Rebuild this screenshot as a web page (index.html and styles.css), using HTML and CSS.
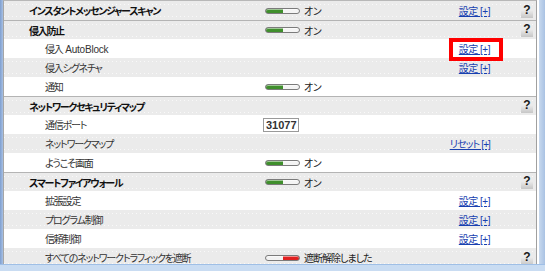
FILE: index.html
```html
<!DOCTYPE html>
<html lang="ja">
<head>
<meta charset="utf-8">
<link rel="stylesheet" href="styles.css">
</head>
<body>
<div class="window">
  <div class="frame">
    <div class="edge-l"></div>
    <div class="panel">
      <div class="row head grey">
        <div class="label">インスタントメッセンジャースキャン</div>
        <div class="value"><span class="switch on"></span><span>オン</span></div>
        <div class="link"><a href="#">設定 [+]</a></div>
        <div class="help"><span class="q">?</span></div>
      </div>
      <div class="row head grey">
        <div class="label">侵入防止</div>
        <div class="value"><span class="switch on"></span><span>オン</span></div>
        <div class="link"></div>
        <div class="help"><span class="q">?</span></div>
      </div>
      <div class="row">
        <div class="label sub">侵入 <span class="latin">AutoBlock</span></div>
        <div class="value"></div>
        <div class="link"><a href="#" class="marked">設定 [+]</a></div>
        <div class="help"></div>
      </div>
      <div class="row grey">
        <div class="label sub">侵入シグネチャ</div>
        <div class="value"></div>
        <div class="link"><a href="#">設定 [+]</a></div>
        <div class="help"></div>
      </div>
      <div class="row">
        <div class="label sub">通知</div>
        <div class="value"><span class="switch on"></span><span>オン</span></div>
        <div class="link"></div>
        <div class="help"></div>
      </div>
      <div class="row head grey">
        <div class="label">ネットワークセキュリティマップ</div>
        <div class="value"></div>
        <div class="link"></div>
        <div class="help"><span class="q">?</span></div>
      </div>
      <div class="row">
        <div class="label sub">通信ポート</div>
        <div class="value"><span class="port">31077</span></div>
        <div class="link"></div>
        <div class="help"></div>
      </div>
      <div class="row grey">
        <div class="label sub">ネットワークマップ</div>
        <div class="value"></div>
        <div class="link"><a href="#" class="tight">リセット [+]</a></div>
        <div class="help"></div>
      </div>
      <div class="row">
        <div class="label sub">ようこそ画面</div>
        <div class="value"><span class="switch on"></span><span>オン</span></div>
        <div class="link"></div>
        <div class="help"></div>
      </div>
      <div class="row head grey">
        <div class="label">スマートファイアウォール</div>
        <div class="value"><span class="switch on"></span><span>オン</span></div>
        <div class="link"></div>
        <div class="help"><span class="q">?</span></div>
      </div>
      <div class="row">
        <div class="label sub">拡張設定</div>
        <div class="value"></div>
        <div class="link"><a href="#">設定 [+]</a></div>
        <div class="help"></div>
      </div>
      <div class="row grey">
        <div class="label sub">プログラム制御</div>
        <div class="value"></div>
        <div class="link"><a href="#">設定 [+]</a></div>
        <div class="help"></div>
      </div>
      <div class="row">
        <div class="label sub">信頼制御</div>
        <div class="value"></div>
        <div class="link"><a href="#">設定 [+]</a></div>
        <div class="help"></div>
      </div>
      <div class="row grey">
        <div class="label sub">すべてのネットワークトラフィックを遮断</div>
        <div class="value"><span class="switch off"></span><span class="status">遮断解除しました</span></div>
        <div class="link"></div>
        <div class="help"><span class="q">?</span></div>
      </div>
    </div>
    <div class="edge-r"></div>
  </div>
  <div class="edge-b"></div>
</div>
</body>
</html>
```

FILE: styles.css
```css
* { box-sizing: border-box; }
html, body { margin: 0; padding: 0; background: #fff; }
body {
  width: 545px;
  height: 271px;
  overflow: hidden;
  font-family: "Liberation Sans", "Noto Sans CJK JP", sans-serif;
  font-size: 10px;
  letter-spacing: -0.5px;
  color: #222;
  font-feature-settings: "palt";
}
.window { display: flex; flex-direction: column; height: 271px; }
.frame { display: flex; height: 264px; overflow: hidden; }
.edge-l {
  width: 3px;
  background: linear-gradient(to right, #7f9fcf, #a7c0e4);
}
.panel {
  flex: 1;
  border-left: 1px solid #a6a6a6;
  border-right: 1px solid #a0a0a0;
  border-top: 1px solid #b8b8b8;
  display: flex;
  flex-direction: column;
}
.edge-r {
  width: 8px;
  background: linear-gradient(to right, #fff 0 2px, #c8d9ee 2px, #a9c2e3);
}
.edge-b {
  height: 7px;
  background: linear-gradient(to bottom, #9fbfe6 0 1px, #c9dcf2 1px);
}
.row {
  display: grid;
  grid-template-columns: 261px 183px 42px 1fr;
  align-items: center;
  height: 19px;
  flex: none;
  background: #fff;
}
.row.grey {
  background-color: #ebebeb;
  background-image:
    repeating-linear-gradient(to right, #f9f9f9 0 1px, transparent 1px 4px),
    repeating-linear-gradient(to right, #f9f9f9 0 1px, transparent 1px 4px);
  background-size: 100% 1px, 100% 1px;
  background-repeat: no-repeat;
  background-position: 0 3px, 0 15px;
}
.row.head { border-top: 1px solid #b4b4b4; }
.row.head:first-child { border-top: none; }
.label {
  padding-left: 25px;
  white-space: nowrap;
  color: #222;
  letter-spacing: -1.2px;
}
.row.head .label { font-weight: bold; color: #111; letter-spacing: -1.3px; }
.label.sub { padding-left: 41px; color: #333; }
.latin { letter-spacing: -0.2px; margin-left: 1px; }
.value {
  display: flex;
  align-items: center;
  gap: 4px;
  white-space: nowrap;
}
.status { letter-spacing: -1px; }
.switch {
  width: 35px;
  height: 6px;
  border-radius: 3px;
  border: 1px solid #7b7b7b;
  flex: none;
}
.switch.on {
  background: linear-gradient(to right, #3f8f2c 0 17px, #f4f4f4 17px);
  box-shadow: inset 0 1px 0 rgba(255,255,255,0.5);
}
.switch.off {
  background: linear-gradient(to right, #f2f2f2 0 17px, #e02020 17px);
  box-shadow: inset 0 1px 0 rgba(255,255,255,0.5);
}
.port {
  margin-left: -2px;
  width: 36px;
  height: 14px;
  border: 1px solid #9a9a9a;
  background: #fff;
  font-weight: bold;
  color: #333;
  font-size: 11px;
  letter-spacing: 0;
  line-height: 12px;
  padding-left: 2px;
}
.link {
  text-align: right;
  white-space: nowrap;
}
.link a {
  color: #1740b0;
  text-decoration: underline;
  position: relative;
}
.link a.tight { letter-spacing: -0.9px; }
.link a.marked::after {
  content: "";
  position: absolute;
  left: -10px;
  right: -13px;
  top: -6px;
  bottom: -6px;
  border: 4px solid #ff0000;
}
.help {
  display: flex;
  justify-content: flex-end;
  padding-right: 3px;
}
.q {
  width: 12px;
  height: 14px;
  text-align: center;
  font-weight: bold;
  font-size: 12px;
  letter-spacing: 0;
  line-height: 13px;
  color: #1a1a1a;
  background: linear-gradient(to bottom, rgba(200,200,200,0) 45%, #c6c6c6 100%);
}
```
